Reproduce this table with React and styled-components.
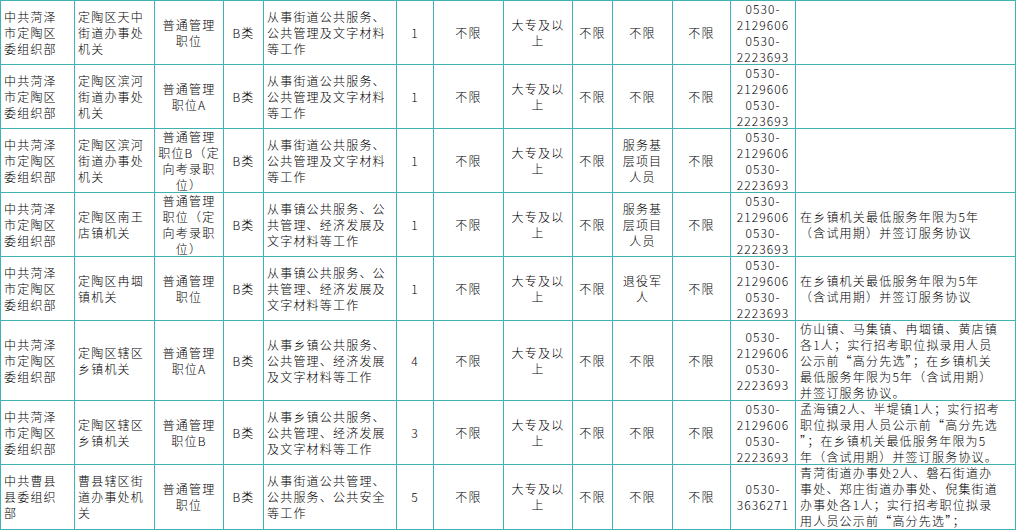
import React from 'react';
import styled, { createGlobalStyle } from 'styled-components';

const GlobalStyle = createGlobalStyle`
  html, body {
    margin: 0;
    padding: 0;
    background: #ffffff;
  }
  body {
    font-family: "Noto Sans CJK SC", "Liberation Sans", sans-serif;
    color: #000000;
    overflow: hidden;
  }
`;

const LINE = '#40b2b4';

const Sheet = styled.table`
  border-collapse: collapse;
  table-layout: fixed;
  width: 1015px;
  border: 1px solid ${LINE};
`;

const Cell = styled.td`
  border: 1px solid ${LINE};
  padding: 0;
  vertical-align: middle;
`;

const Content = styled.div`
  height: ${(p) => p.$h}px;
  display: flex;
  flex-direction: column;
  justify-content: center;
  padding-left: ${(p) => (p.$align === 'left' ? p.$indent : 0)}px;
  text-align: ${(p) => p.$align};
  font-size: 12px;
  font-weight: 300;
  line-height: 16px;
  letter-spacing: ${(p) => (p.$digits ? '1.1px' : '1.2px')};
  white-space: nowrap;
  overflow: visible;
`;

const cols = [74, 80, 69, 40, 133, 37, 70, 69, 40, 60, 58, 65, 220];

const align = ['left', 'left', 'center', 'center', 'left', 'center', 'center', 'center', 'center', 'center', 'center', 'center', 'left'];

const phones = ['0530-', '2129606', '0530-', '2223693'];
const heze = ['中共菏泽', '市定陶区', '委组织部'];
const dazhuan = ['大专及以', '上'];
const jiedaoWork = ['从事街道公共服务、', '公共管理及文字材料', '等工作'];
const zhenWork = ['从事镇公共服务、公', '共管理、经济发展及', '文字材料等工作'];
const xiangWork = ['从事乡镇公共服务、', '公共管理、经济发展', '及文字材料等工作'];
const fuwu = ['服务基', '层项目', '人员'];
const nianxian = ['在乡镇机关最低服务年限为5年', '（含试用期）并签订服务协议'];

const rows = [
  {
    h: 63,
    cells: [heze, ['定陶区天中', '街道办事处', '机关'], ['普通管理', '职位'], ['B类'], jiedaoWork, ['1'], ['不限'], dazhuan, ['不限'], ['不限'], ['不限'], phones, []],
  },
  {
    h: 63,
    cells: [heze, ['定陶区滨河', '街道办事处', '机关'], ['普通管理', '职位A'], ['B类'], jiedaoWork, ['1'], ['不限'], dazhuan, ['不限'], ['不限'], ['不限'], phones, []],
  },
  {
    h: 63,
    cells: [heze, ['定陶区滨河', '街道办事处', '机关'], ['普通管理', '职位B（定', '向考录职', '位）'], ['B类'], jiedaoWork, ['1'], ['不限'], dazhuan, ['不限'], fuwu, ['不限'], phones, []],
  },
  {
    h: 63,
    cells: [heze, ['定陶区南王', '店镇机关'], ['普通管理', '职位（定', '向考录职', '位）'], ['B类'], zhenWork, ['1'], ['不限'], dazhuan, ['不限'], fuwu, ['不限'], phones, nianxian],
  },
  {
    h: 63,
    cells: [heze, ['定陶区冉堌', '镇机关'], ['普通管理', '职位'], ['B类'], zhenWork, ['1'], ['不限'], dazhuan, ['不限'], ['退役军', '人'], ['不限'], phones, nianxian],
  },
  {
    h: 79,
    cells: [heze, ['定陶区辖区', '乡镇机关'], ['普通管理', '职位A'], ['B类'], xiangWork, ['4'], ['不限'], dazhuan, ['不限'], ['不限'], ['不限'], phones, [
      '仿山镇、马集镇、冉堌镇、黄店镇',
      '各1人；实行招考职位拟录用人员',
      '公示前“高分先选”；在乡镇机关',
      '最低服务年限为5年（含试用期）',
      '并签订服务协议。',
    ]],
  },
  {
    h: 63,
    cells: [heze, ['定陶区辖区', '乡镇机关'], ['普通管理', '职位B'], ['B类'], xiangWork, ['3'], ['不限'], dazhuan, ['不限'], ['不限'], ['不限'], phones, [
      '孟海镇2人、半堤镇1人；实行招考',
      '职位拟录用人员公示前“高分先选',
      '”；在乡镇机关最低服务年限为5',
      '年（含试用期）并签订服务协议。',
    ]],
  },
  {
    h: 64,
    cells: [['中共曹县', '县委组织', '部'], ['曹县辖区街', '道办事处机', '关'], ['普通管理', '职位'], ['B类'], ['从事街道公共管理、', '公共服务、公共安全', '等工作'], ['5'], ['不限'], dazhuan, ['不限'], ['不限'], ['不限'], ['0530-', '3636271'], [
      '青菏街道办事处2人、磐石街道办',
      '事处、郑庄街道办事处、倪集街道',
      '办事处各1人；实行招考职位拟录',
      '用人员公示前“高分先选”；',
    ]],
  },
];

export default function App() {
  return (
    <>
      <GlobalStyle />
      <Sheet>
        <colgroup>
          {cols.map((w, i) => (
            <col key={i} style={{ width: w }} />
          ))}
        </colgroup>
        <tbody>
          {rows.map((row, r) => (
            <tr key={r}>
              {row.cells.map((lines, c) => (
                <Cell key={c}>
                  <Content
                    $h={row.h}
                    $align={align[c]}
                    $indent={c === 12 ? 4 : 3}
                    $digits={c === 11 || c === 5}
                  >
                    {lines.map((line, i) => (
                      <div key={i}>{line}</div>
                    ))}
                  </Content>
                </Cell>
              ))}
            </tr>
          ))}
        </tbody>
      </Sheet>
    </>
  );
}
